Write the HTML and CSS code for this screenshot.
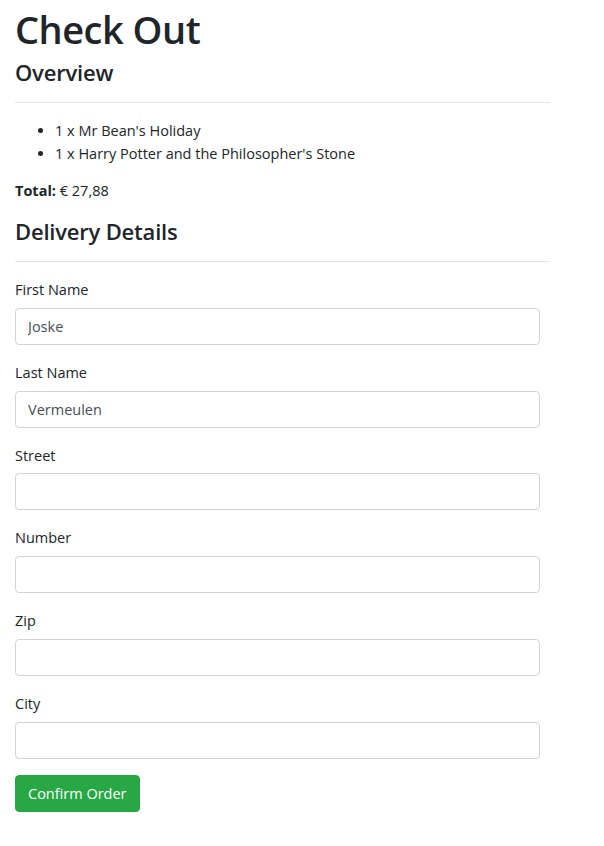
FILE: index.html
```html
<!DOCTYPE html>
<html>
<head>
<meta charset="utf-8">
<link rel="stylesheet" href="styles.css">
</head>
<body>
<div class="container">
  <h1 class="title">Check Out</h1>
  <h4 class="section">Overview</h4>
  <hr class="rule">
  <ul class="items">
    <li>1 x Mr Bean's Holiday</li>
    <li>1 x Harry Potter and the Philosopher's Stone</li>
  </ul>
  <p class="total"><strong>Total:</strong> € 27,88</p>
  <h4 class="section">Delivery Details</h4>
  <hr class="rule">
  <form class="form">
    <div class="group">
      <label class="label">First Name</label>
      <input class="field" type="text" value="Joske">
    </div>
    <div class="group">
      <label class="label">Last Name</label>
      <input class="field" type="text" value="Vermeulen">
    </div>
    <div class="group">
      <label class="label">Street</label>
      <input class="field" type="text">
    </div>
    <div class="group">
      <label class="label">Number</label>
      <input class="field" type="text">
    </div>
    <div class="group">
      <label class="label">Zip</label>
      <input class="field" type="text">
    </div>
    <div class="group">
      <label class="label">City</label>
      <input class="field" type="text">
    </div>
    <button class="btn" type="button">Confirm Order</button>
  </form>
</div>
</body>
</html>
```
FILE: styles.css
```css
html, body {
  margin: 0;
  padding: 0;
  background: #fff;
}
body {
  font-family: "Open Sans", "Noto Sans", sans-serif;
  font-size: 14.5px;
  line-height: 1.5;
  color: #212529;
}
.container {
  width: 535px;
  padding: 7px 0 0 15px;
}
.title {
  font-size: 38px;
  font-weight: 600;
  line-height: 1.2;
  margin: 0 0 6px 0;
  letter-spacing: -0.5px;
}
.section {
  font-size: 22px;
  font-weight: 600;
  line-height: 1.2;
  margin: 0 0 17px 0;
  letter-spacing: -0.2px;
}
.rule {
  border: 0;
  border-top: 1px solid #e5e5e5;
  margin: 0 0 16px 0;
}
.items {
  margin: 0 0 15px 0;
  padding-left: 40px;
}
.items li {
  line-height: 23px;
}
.total {
  margin: 0 0 16px 0;
}
.total strong {
  font-weight: 700;
}
.form {
  width: 525px;
  margin-top: 17px;
}
.group {
  margin-bottom: 17px;
}
.group:last-of-type {
  margin-bottom: 16px;
}
.label {
  display: block;
  margin-bottom: 7px;
}
.field {
  display: block;
  box-sizing: border-box;
  width: 100%;
  height: 37px;
  padding: 6px 12px;
  font-family: inherit;
  font-size: 14.5px;
  color: #495057;
  background: #fff;
  border: 1px solid #ced4da;
  border-radius: 4px;
  outline: none;
}
.btn {
  display: block;
  height: 37px;
  padding: 0 12px;
  font-family: inherit;
  font-size: 14.5px;
  color: #fff;
  background: #28a745;
  border: 1px solid #28a745;
  border-radius: 4px;
}
```
